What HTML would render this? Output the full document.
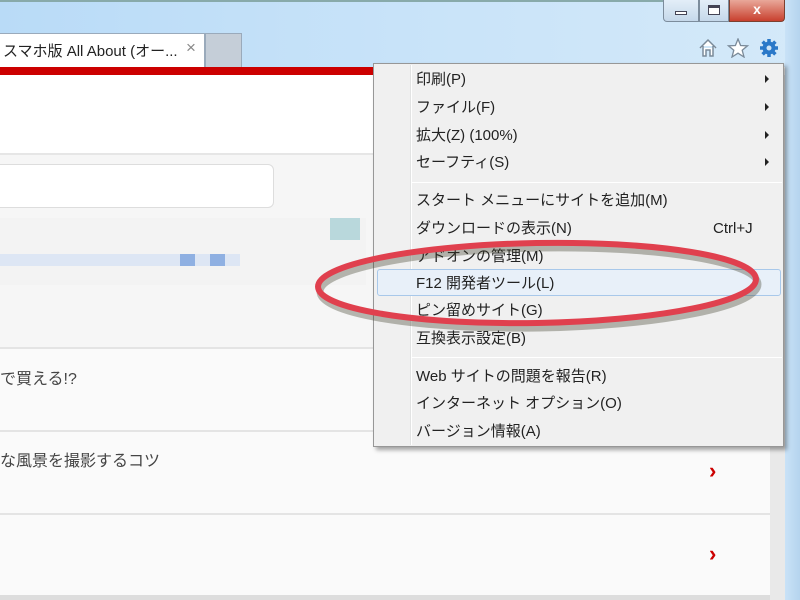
<!DOCTYPE html>
<html><head><meta charset="utf-8"><style>
*{margin:0;padding:0;box-sizing:border-box}
body{width:800px;height:600px;overflow:hidden;position:relative;background:#fff;font-family:"Liberation Sans","Noto Sans CJK JP",sans-serif;}
.abs{position:absolute}
.mi{position:absolute;left:416px;font-size:15px;color:#222;line-height:18px}
.ar{position:absolute;left:765px;width:0;height:0;border-left:4px solid #222;border-top:4px solid transparent;border-bottom:4px solid transparent}
</style></head><body>
<div class="abs" style="left:0;top:0;width:800px;height:67px;background:linear-gradient(90deg,#b9dbf7,#c8e3f9 50%,#d4e9f9)"></div>
<div class="abs" style="left:0;top:0;width:800px;height:2px;background:#8aa"></div>
<div class="abs" style="left:663px;top:0;width:36px;height:22px;background:linear-gradient(#e3eef8,#c5d8ea);border:1px solid #7c8c9c;border-top:none;border-radius:0 0 0 4px"></div>
<div class="abs" style="left:675px;top:11px;width:12px;height:4px;border:1px solid #445;background:#fff"></div>
<div class="abs" style="left:699px;top:0;width:30px;height:22px;background:linear-gradient(#e3eef8,#c5d8ea);border:1px solid #7c8c9c;border-top:none"></div>
<div class="abs" style="left:708px;top:5px;width:12px;height:10px;border:1px solid #445;border-top-width:3px;background:#fff"></div>
<div class="abs" style="left:729px;top:0;width:56px;height:22px;background:linear-gradient(#e9a89a,#c8402e);border:1px solid #7c4030;border-top:none;border-radius:0 0 4px 0;color:#fff;font-weight:bold;font-size:14px;text-align:center;line-height:18px">x</div>
<div class="abs" style="left:785px;top:0;width:15px;height:600px;background:linear-gradient(90deg,#c9e2f7,#b5d4ee)"></div>
<svg class="abs" style="left:698px;top:38px" width="84" height="20" viewBox="0 0 84 20">
<path d="M2 10 L10 2 L18 10 M5 8 V18 H8 V12 H12 V18 H15 V8" fill="#fff" stroke="#7a8a99" stroke-width="1.5"/>
<path d="M40 1 L42.6 7.5 L49.5 7.8 L44.2 12.2 L46 19 L40 15.2 L34 19 L35.8 12.2 L30.5 7.8 L37.4 7.5 Z" fill="#fff" stroke="#7a8a99" stroke-width="1.3"/>
<g transform="translate(71,10)" fill="#2a78c8"><circle r="6.5"/><g stroke="#2a78c8" stroke-width="3.5"><path d="M0 -9V9M-9 0H9M-6.4 -6.4L6.4 6.4M6.4 -6.4L-6.4 6.4"/></g><circle r="2.5" fill="#cfe4f6"/></g>
</svg>
<div class="abs" style="left:0;top:33px;width:205px;height:34px;background:#fff;border:1px solid #9aaabb;border-left:none;border-bottom:none"></div>
<div class="abs" style="left:3px;top:40px;font-size:15px;color:#222;white-space:nowrap">スマホ版 All About (オー...</div>
<div class="abs" style="left:186px;top:38px;font-size:17px;color:#888">×</div>
<div class="abs" style="left:205px;top:33px;width:37px;height:34px;background:#c5ced8;border:1px solid #9aaabb;border-bottom:none"></div>
<div class="abs" style="left:0;top:67px;width:785px;height:533px;background:#fff"></div>
<div class="abs" style="left:0;top:67px;width:373px;height:8px;background:#c00"></div>
<div class="abs" style="left:0;top:153px;width:770px;height:195px;background:#f6f6f6;border-top:2px solid #e6e6e6"></div>
<div class="abs" style="left:-10px;top:164px;width:284px;height:44px;background:#fff;border:1px solid #ddd;border-radius:6px"></div>
<div class="abs" style="left:0;top:218px;width:366px;height:67px;background:#f3f3f3"></div>
<div class="abs" style="left:0;top:254px;width:240px;height:12px;background:#dde6f4"></div>
<div class="abs" style="left:180px;top:254px;width:15px;height:12px;background:#8fb0e2"></div>
<div class="abs" style="left:210px;top:254px;width:15px;height:12px;background:#8fb0e2"></div>
<div class="abs" style="left:330px;top:218px;width:30px;height:22px;background:#b9d8dc"></div>
<div class="abs" style="left:0;top:347px;width:770px;height:84px;background:#fafafa;border-top:2px solid #e4e4e4"></div>
<div class="abs" style="left:0;top:430px;width:770px;height:84px;background:#fafafa;border-top:2px solid #e4e4e4"></div>
<div class="abs" style="left:0;top:513px;width:770px;height:84px;background:#fafafa;border-top:2px solid #e4e4e4"></div>
<div class="abs" style="left:0;top:595px;width:785px;height:5px;background:#ddd"></div>
<div class="abs" style="left:770px;top:75px;width:15px;height:525px;background:#e9e9e9"></div>
<div class="abs" style="left:0;top:365px;font-size:16px;color:#444">で買える!?</div>
<div class="abs" style="left:0;top:447px;font-size:16px;color:#444">な風景を撮影するコツ</div>
<div class="abs" style="left:709px;top:458px;font-size:22px;color:#c00;font-weight:bold">›</div>
<div class="abs" style="left:709px;top:541px;font-size:22px;color:#c00;font-weight:bold">›</div>
<div class="abs" style="left:373px;top:63px;width:411px;height:384px;background:#f0f0f0;border:1px solid #979797;box-shadow:3px 3px 4px rgba(0,0,0,.35)"></div>
<div class="abs" style="left:410px;top:65px;width:1px;height:380px;background:#e2e3e3"></div>
<div class="abs" style="left:411px;top:65px;width:1px;height:380px;background:#fff"></div>
<div class="abs" style="left:412px;top:182px;width:370px;height:1px;background:#e0e0e0;border-bottom:1px solid #fff"></div>
<div class="abs" style="left:412px;top:357px;width:370px;height:1px;background:#e0e0e0;border-bottom:1px solid #fff"></div>
<div class="abs" style="left:377px;top:269px;width:404px;height:27px;background:#e8f0f9;border:1px solid #a8c8ea;border-radius:3px"></div>
<div class="mi" style="top:71px">印刷(P)</div><div class="ar" style="top:75px"></div>
<div class="mi" style="top:99px">ファイル(F)</div><div class="ar" style="top:103px"></div>
<div class="mi" style="top:127px">拡大(Z) (100%)</div><div class="ar" style="top:131px"></div>
<div class="mi" style="top:154px">セーフティ(S)</div><div class="ar" style="top:158px"></div>
<div class="mi" style="top:192px">スタート メニューにサイトを追加(M)</div>
<div class="mi" style="top:220px">ダウンロードの表示(N)</div><div class="mi" style="top:220px;left:713px">Ctrl+J</div>
<div class="mi" style="top:248px">アドオンの管理(M)</div>
<div class="mi" style="top:275px">F12 開発者ツール(L)</div>
<div class="mi" style="top:302px">ピン留めサイト(G)</div>
<div class="mi" style="top:330px">互換表示設定(B)</div>
<div class="mi" style="top:368px">Web サイトの問題を報告(R)</div>
<div class="mi" style="top:395px">インターネット オプション(O)</div>
<div class="mi" style="top:423px">バージョン情報(A)</div>
<svg class="abs" style="left:0;top:0" width="800" height="600">
<ellipse cx="537" cy="285" rx="219" ry="40" fill="none" stroke="rgba(60,60,40,.35)" stroke-width="7" transform="translate(2,3) rotate(-1 537 285)"/>
<ellipse cx="537" cy="283" rx="219" ry="40" fill="none" stroke="#e0404e" stroke-width="6" transform="rotate(-1 537 283)"/>
</svg>
</body></html>
